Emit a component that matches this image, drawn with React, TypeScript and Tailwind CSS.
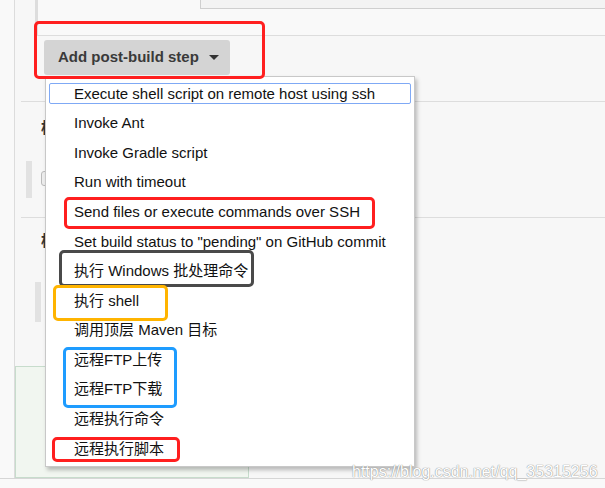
const ITEMS = [
  "Execute shell script on remote host using ssh",
  "Invoke Ant",
  "Invoke Gradle script",
  "Run with timeout",
  "Send files or execute commands over SSH",
  'Set build status to "pending" on GitHub commit',
  "执行 Windows 批处理命令",
  "执行 shell",
  "调用顶层 Maven 目标",
  "远程FTP上传",
  "远程FTP下载",
  "远程执行命令",
  "远程执行脚本",
];

// annotation frames drawn over the screenshot
const MARKS = [
  { cls: "left-[34px] top-[21px] w-[231px] h-[58px] border-[#ff1f1f]" },
  { cls: "left-[64px] top-[197px] w-[311px] h-[32px] border-[#ff1f1f]" },
  { cls: "left-[59px] top-[250px] w-[195px] h-[37px] border-[#4a4a4a]" },
  { cls: "left-[53px] top-[285px] w-[115px] h-[36px] border-[#ffb400]" },
  { cls: "left-[63px] top-[347px] w-[114px] h-[61px] border-[#1e9cff]" },
  { cls: "left-[52px] top-[437px] w-[128px] h-[25px] border-[#ff1f1f]" },
];

export default function App() {
  return (
    <div className="relative h-[488px] w-[605px] overflow-hidden bg-[#f9f9f9] font-['Liberation_Sans','Noto_Sans_CJK_SC',sans-serif]">
      <div className="ml-[14px] flex h-[478px] flex-col border-l border-[#dcdcdc] bg-[#f7f7f7]">
        <div className="ml-[20px] flex h-[36px] border-b border-l-[3px] border-[#dddddd] bg-[#f9f9f9]">
          <div className="ml-[162px] h-[9px] flex-1 border-b border-l border-[#cfcfcf] bg-[#f3f3f3]" />
        </div>
        <div className="pl-[29px] pt-[4px]">
          <button className="flex h-[35px] items-center gap-[10px] rounded-[3px] bg-[#d4d4d4] pl-[14px] pr-[11px] text-[15px] font-bold text-[#3a3a3a]">
            Add post-build step
            <span className="inline-block h-0 w-0 border-x-[5px] border-t-[5px] border-x-transparent border-t-[#333]" />
          </button>
        </div>
        <div className="mt-[26px] ml-[6px] border-t border-[#dddddd]" />
        <div className="relative h-[115px]">
          <div className="absolute left-[26px] top-[15px] text-[15px] font-bold text-[#333]">构</div>
          <div className="absolute left-[11px] top-[59px] h-[37px] w-[6px] bg-[#e2e2e2]" />
          <div className="absolute left-[26px] top-[69px] h-[15px] w-[8px] rounded-[3px] border border-[#bbb] bg-[#eee]" />
        </div>
        <div className="ml-[6px] border-t border-[#dddddd]" />
        <div className="relative h-[148px]">
          <div className="absolute left-[26px] top-[12px] text-[15px] font-bold text-[#333]">构</div>
          <div className="absolute left-[20px] top-[64px] h-[40px] w-[6px] bg-[#e2e2e2]" />
        </div>
        <div className="mr-[356px] flex-1 border border-[#c7dccc] bg-[#f1f6f0]" />
      </div>
      <div className="border-t border-[#d6d6d6]" />

      <div className="absolute left-[45px] top-[76px] flex h-[391px] w-[370px] flex-col border border-[#c8c8c8] bg-white pt-[2px] shadow-[2px_3px_4px_rgba(0,0,0,0.25)]">
        {ITEMS.map((t, i) => (
          <div key={t} className="flex h-[29.6px] items-center px-[3px]">
            <div
              className={`flex h-[21px] flex-1 items-center rounded-[2px] pl-[24px] text-[15px] text-[#111] ${
                i === 0 ? "border border-[#7fa9f5]" : "border border-transparent"
              }`}
            >
              {t}
            </div>
          </div>
        ))}
      </div>

      {MARKS.map((m, i) => (
        <div key={i} className={`pointer-events-none absolute rounded-[5px] border-[3px] ${m.cls}`} />
      ))}

      <div className="absolute left-[352px] top-[460px] text-[16px] text-white [text-shadow:0_0_1px_#888,0_0_1px_#999]">
        https://blog.csdn.net/qq_35315256
      </div>
    </div>
  );
}
